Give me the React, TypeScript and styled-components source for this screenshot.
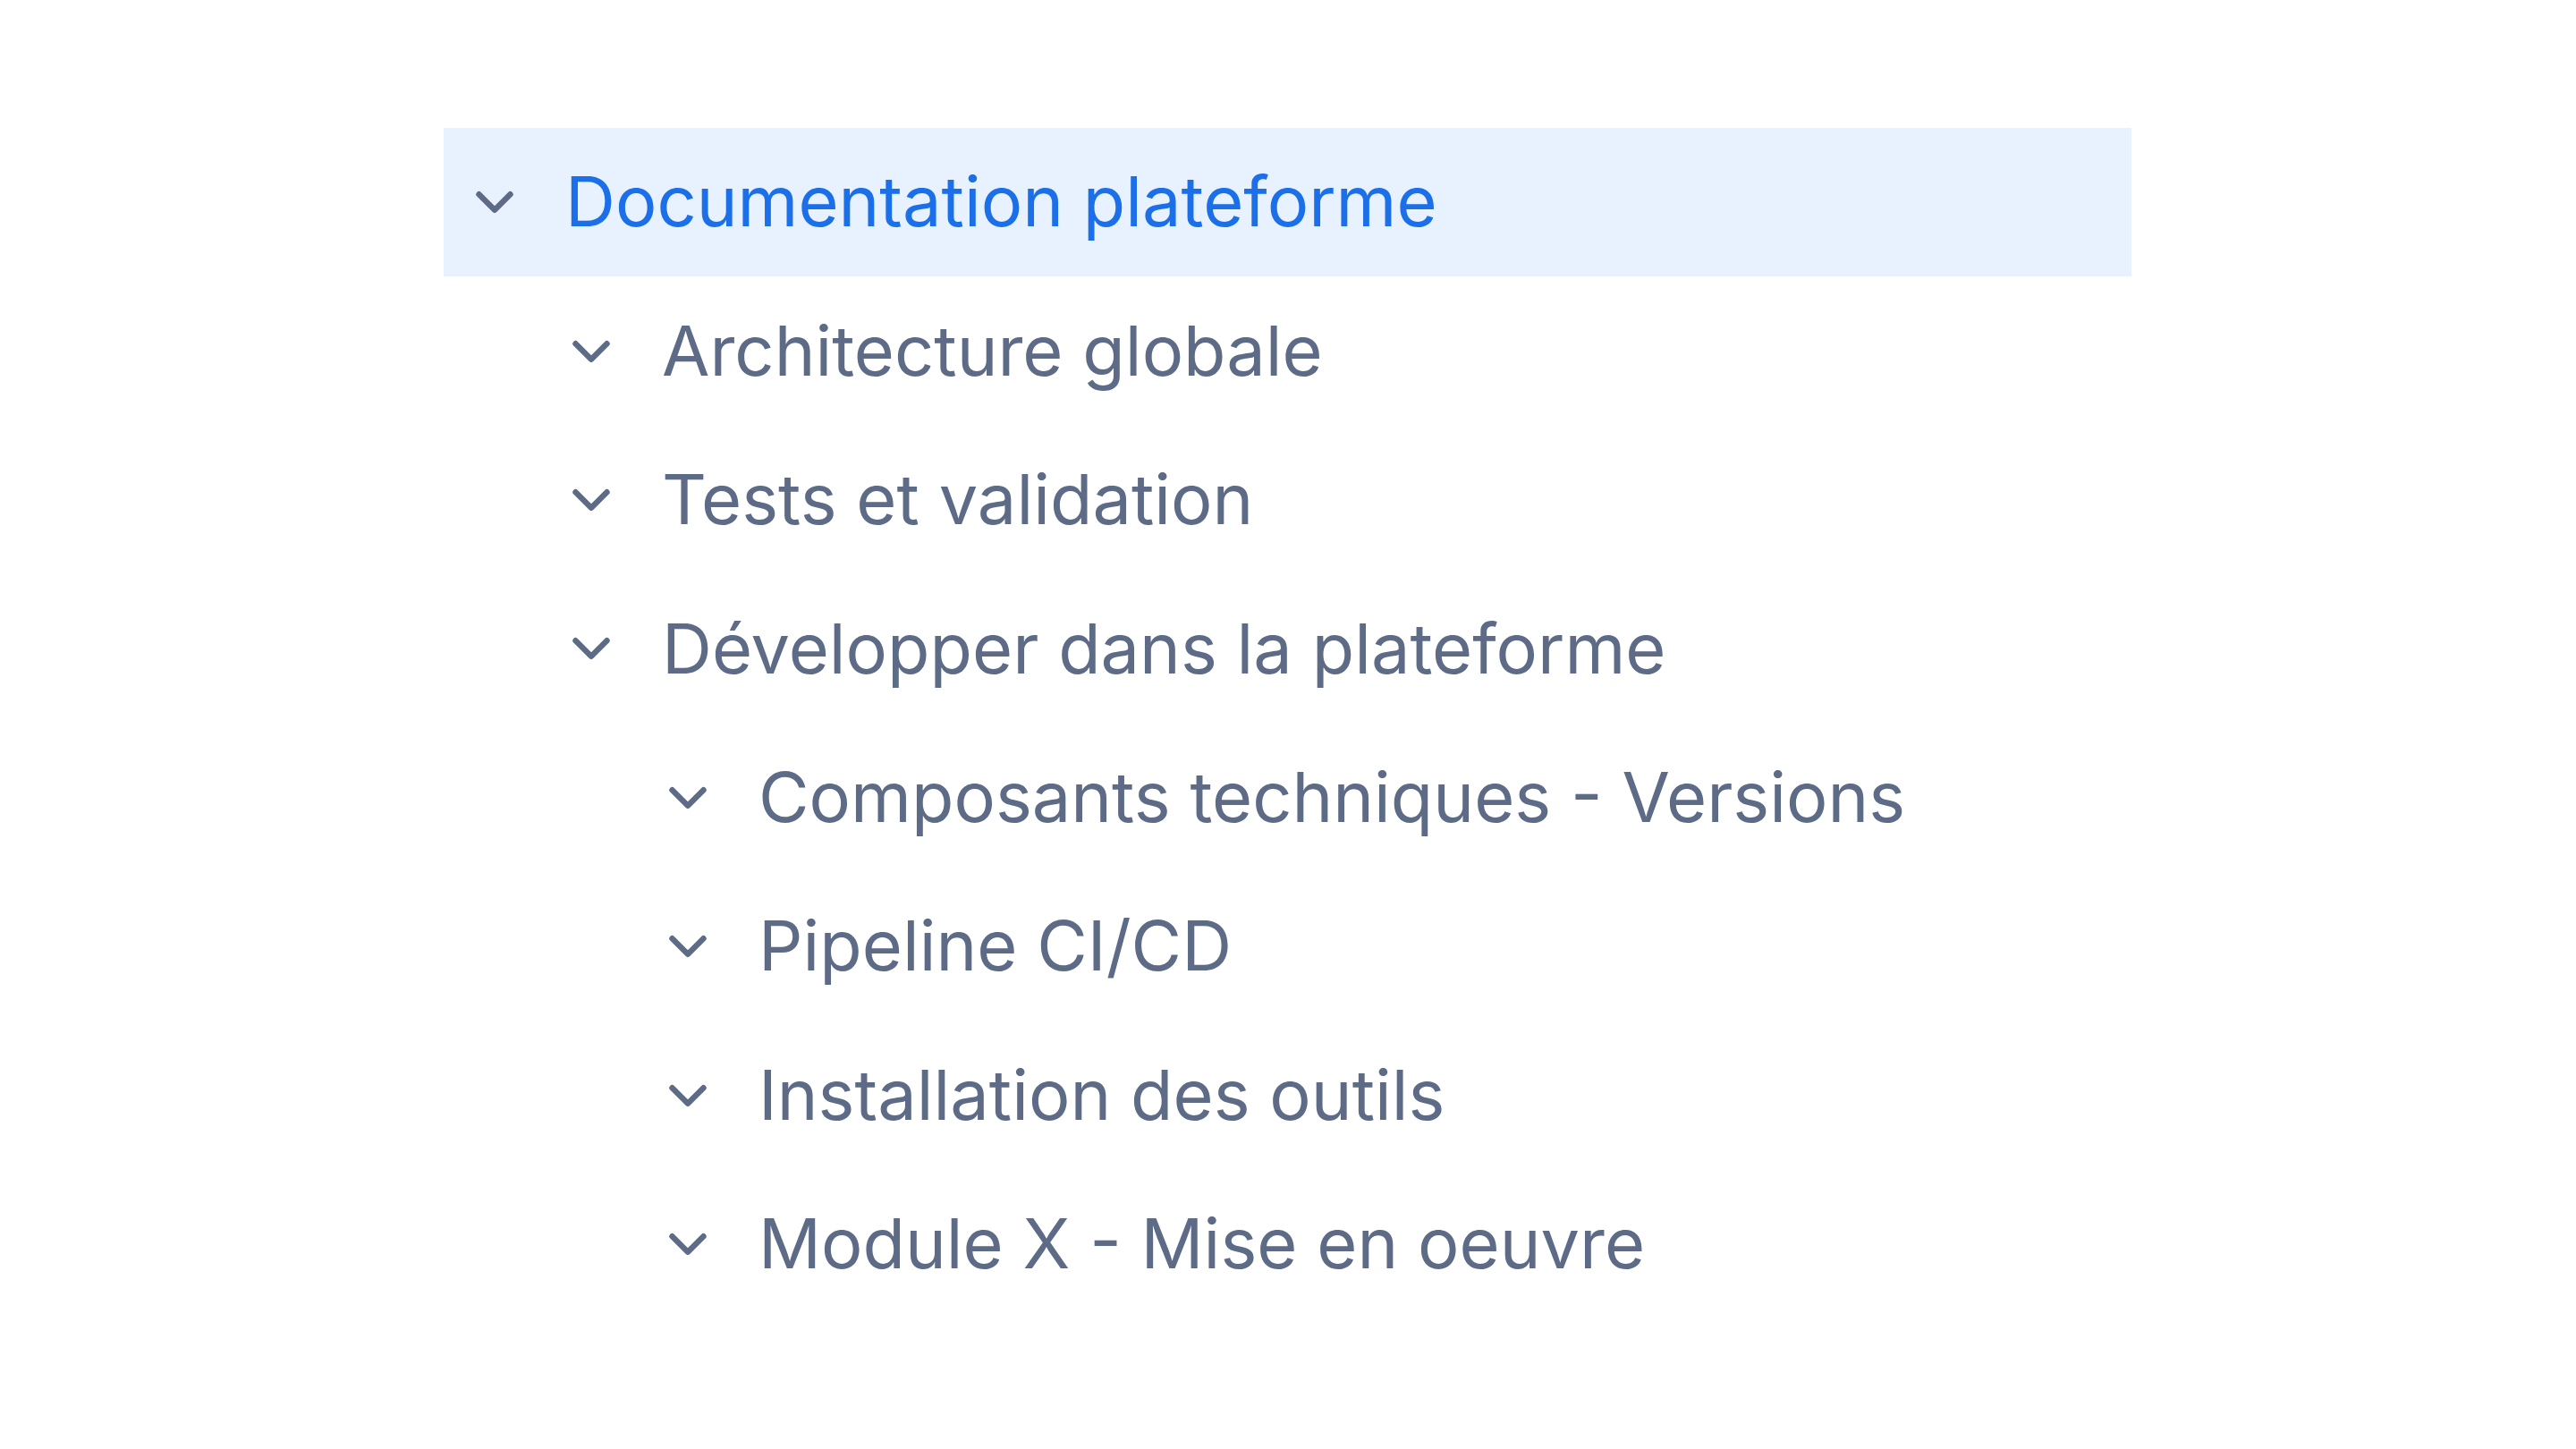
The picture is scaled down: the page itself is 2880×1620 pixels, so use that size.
import styled, { createGlobalStyle } from 'styled-components'
import { ChevronDown } from 'lucide-react'

const GlobalStyle = createGlobalStyle`
  html, body {
    margin: 0;
    padding: 0;
    background: #ffffff;
  }

  body {
    font-family: Inter, 'Noto Sans', sans-serif;
  }
`

const Page = styled.div`
  width: 2880px;
  height: 1620px;
  padding: 143px 0 0 496px;
  box-sizing: border-box;
`

const Tree = styled.ul`
  list-style: none;
  margin: 0;
  padding: 0;
  width: 1887px;
`

const Row = styled.li<{ $level: number; $active?: boolean }>`
  display: flex;
  align-items: center;
  gap: 44px;
  height: 166.4px;
  padding-left: ${(p) => 22 + p.$level * 108}px;
  background: ${(p) => (p.$active ? '#e8f2fe' : 'transparent')};
  color: ${(p) => (p.$active ? '#1b6fe8' : '#5d6b86')};
  cursor: pointer;
`

const Toggle = styled.span`
  display: flex;
  align-items: center;
  justify-content: center;
  width: 70px;
  height: 70px;
  flex-shrink: 0;
  color: #5d6b86;
`

const Label = styled.span`
  font-size: 77.5px;
  font-weight: 400;
  line-height: 1;
  white-space: nowrap;
`

type Node = {
  label: string
  level: number
  active?: boolean
}

const nodes: Node[] = [
  { label: 'Documentation plateforme', level: 0, active: true },
  { label: 'Architecture globale', level: 1 },
  { label: 'Tests et validation', level: 1 },
  { label: 'Développer dans la plateforme', level: 1 },
  { label: 'Composants techniques - Versions', level: 2 },
  { label: 'Pipeline CI/CD', level: 2 },
  { label: 'Installation des outils', level: 2 },
  { label: 'Module X - Mise en oeuvre', level: 2 },
]

const App = () => {
  return (
    <>
      <GlobalStyle />
      <Page>
        <Tree>
          {nodes.map((node) => (
            <Row key={node.label} $level={node.level} $active={node.active}>
              <Toggle>
                <ChevronDown size={70} strokeWidth={2.2} />
              </Toggle>
              <Label>{node.label}</Label>
            </Row>
          ))}
        </Tree>
      </Page>
    </>
  )
}

export default App
